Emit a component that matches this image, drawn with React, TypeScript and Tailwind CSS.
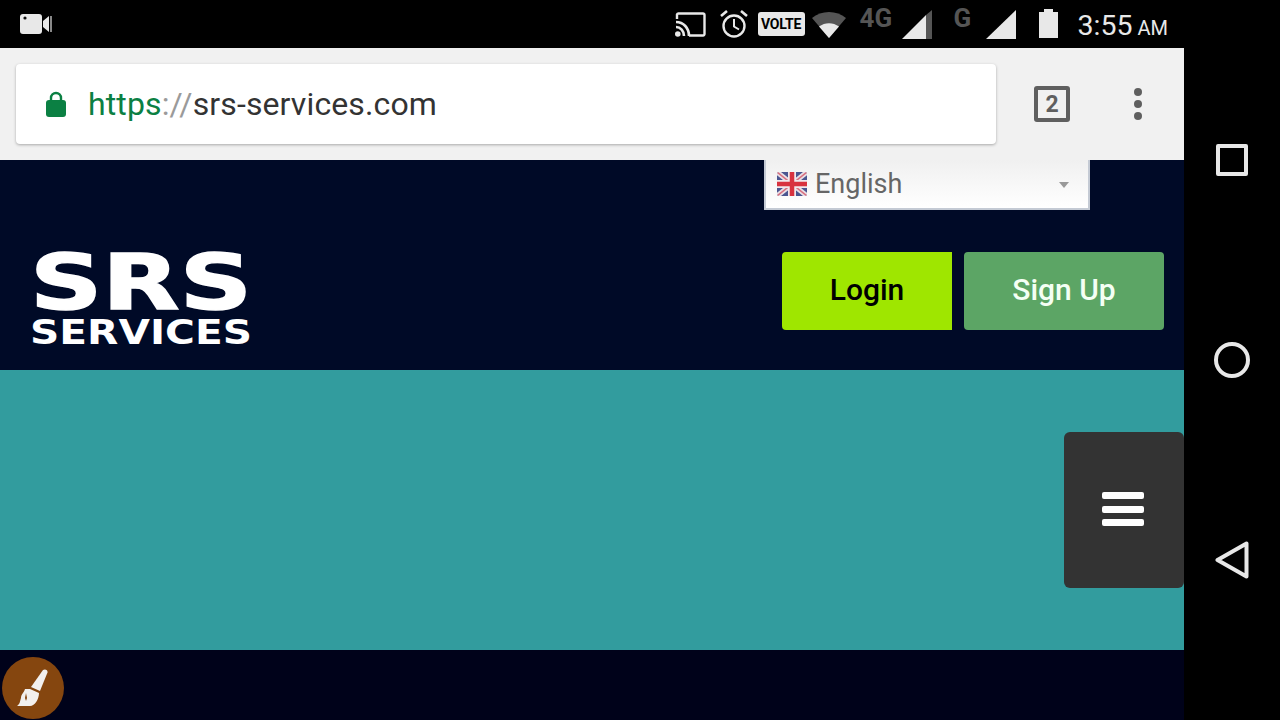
const StatusBar = () => (
  <div className="h-12 bg-black flex items-start relative font-['Roboto',sans-serif]">
    {/* camera */}
    <svg className="ml-5 mt-[13px]" width="32" height="22" viewBox="0 0 32 22">
      <rect x="0" y="1" width="22" height="20" rx="3" fill="#e8e8e8" />
      <circle cx="5" cy="5" r="1.6" fill="#111" />
      <path d="M23 8l6-5v16l-6-5z" fill="#e8e8e8" />
      <rect x="30" y="3" width="2" height="16" fill="#888" />
    </svg>
    <div className="ml-auto mr-4 flex items-start">
      {/* cast */}
      <svg className="mt-3" width="31" height="25" viewBox="0 0 31 25" fill="none">
        <path d="M2 7V2.500A1.500 1.500 0 0 1 3.500 1.500H28A1.500 1.500 0 0 1 29.500 3V22A1.500 1.500 0 0 1 28 23.500H14" stroke="#e8e8e8" strokeWidth="2.400" />
        <path d="M1 10c7.500 0 13 6 13 14M1 15c4.500 0 8 4 8 9" stroke="#e8e8e8" strokeWidth="2.600" />
        <circle cx="2.800" cy="22" r="2.800" fill="#e8e8e8" />
      </svg>
      {/* alarm */}
      <svg className="ml-[14px] mt-[10px]" width="28" height="28" viewBox="0 0 28 28" fill="none">
        <circle cx="14" cy="16" r="10.500" stroke="#e8e8e8" strokeWidth="2.400" />
        <path d="M14 9v7.500l5 3" stroke="#e8e8e8" strokeWidth="2" />
        <path d="M1 6l6-5M27 6l-6-5" stroke="#e8e8e8" strokeWidth="2.600" />
      </svg>
      <div className="ml-[10px] mt-3 w-[47px] h-6 rounded-[3px] bg-[#e8e8e8] text-black text-[14px] leading-6 font-bold text-center tracking-[-0.2px]">
        VOLTE
      </div>
      {/* wifi */}
      <svg className="ml-[7px] mt-[10px]" width="34" height="28" viewBox="0 0 34 28">
        <path d="M0 8C9 0 25 0 34 8L17 28z" fill="#555" />
        <path d="M7 16.500c6-4.500 14-4.500 20 0L17 28z" fill="#e8e8e8" />
      </svg>
      <span className="ml-[14px] mt-[4px] text-[26px] leading-7 font-bold text-[#555] w-[34px]">4G</span>
      <svg className="ml-2 mt-[10px]" width="30" height="29" viewBox="0 0 30 29">
        <path d="M0 29L24 5v24z" fill="#e8e8e8" />
        <path d="M24 5l6-5v29h-6z" fill="#555" />
      </svg>
      <span className="ml-[22px] mt-[4px] text-[26px] leading-7 font-bold text-[#555] w-[16px]">G</span>
      <svg className="ml-4 mt-[10px]" width="30" height="29" viewBox="0 0 30 29">
        <path d="M0 29L30 0v29z" fill="#e8e8e8" />
      </svg>
      <svg className="ml-[23px] mt-[9px]" width="19" height="29" viewBox="0 0 19 29">
        <path d="M5 0h9v3h5v26H0V3h5z" fill="#e8e8e8" />
      </svg>
      <div className="ml-5 mt-[8px] text-[#e8e8e8] leading-9 whitespace-nowrap">
        <span className="text-[28.5px]">3:55</span>
        <span className="text-[20px] ml-[5px]">AM</span>
      </div>
    </div>
  </div>
);

const Toolbar = () => (
  <div className="h-28 bg-[#f1f1f1] flex items-center pl-4 font-['Roboto',sans-serif]">
    <div className="w-[980px] h-20 bg-white rounded-[4px] shadow-[0_1px_3px_rgba(0,0,0,0.3)] flex items-center pl-[30px]">
      <svg width="20" height="26" viewBox="0 0 20 26" fill="none">
        <path d="M5 10V7a5 5 0 0 1 10 0v3" stroke="#0b8043" strokeWidth="2.400" />
        <rect x="0" y="9" width="20" height="17" rx="3" fill="#0b8043" />
      </svg>
      <div className="ml-[22px] text-[32px] tracking-[0.12px] text-[#333] whitespace-nowrap leading-none">
        <span className="text-[#0b8043]">https</span>
        <span className="text-[#9a9a9a]">://</span>
        srs-services.com
      </div>
    </div>
    <div className="ml-[38px] w-9 h-9 border-4 border-[#5f5f5f] rounded-[3px] flex items-center justify-center text-[#5f5f5f] text-[23px] font-bold leading-none">
      2
    </div>
    <div className="ml-[64px] flex flex-col gap-1">
      <div className="w-2 h-2 rounded-full bg-[#5f5f5f]" />
      <div className="w-2 h-2 rounded-full bg-[#5f5f5f]" />
      <div className="w-2 h-2 rounded-full bg-[#5f5f5f]" />
    </div>
  </div>
);

const UkFlag = () => (
  <svg width="30" height="24" viewBox="0 0 30 24" className="rounded-[2px] blur-[0.5px]">
    <rect width="30" height="24" fill="#4a5590" />
    <path d="M0 0L30 24M30 0L0 24" stroke="#e8dfe6" strokeWidth="5" />
    <path d="M0 0L30 24M30 0L0 24" stroke="#d9707f" strokeWidth="1.500" />
    <path d="M15 0v24M0 12h30" stroke="#f0e8ec" strokeWidth="8" />
    <path d="M15 0v24M0 12h30" stroke="#d8323f" strokeWidth="4.500" />
  </svg>
);

const Header = () => (
  <div className="h-[210px] bg-[#000a27] font-['Roboto',sans-serif]">
    <div className="flex justify-end pr-[94px]">
      <div className="w-[326px] h-[50px] border-2 border-t-0 border-[#c4cad4] bg-gradient-to-b from-[#f0f0f0] to-white flex items-center pl-[11px] pr-[19px]">
        <UkFlag />
        <span className="ml-2 text-[27px] leading-none text-[#666]">English</span>
        <div className="ml-auto w-0 h-0 border-x-[5px] border-x-transparent border-t-[6px] border-t-[#999] mt-[2px]" />
      </div>
    </div>
    <div className="flex items-start justify-between pl-[30px] pr-5 mt-[42px]">
      <div className="flex flex-col">
        <svg width="222" height="60" viewBox="0 0 222 60" className="block overflow-visible">
          <text x="0" y="57" textLength="222" lengthAdjust="spacingAndGlyphs" fontFamily="'DejaVu Sans', sans-serif" fontWeight="700" fontSize="76" fill="#fff" stroke="#fff" strokeWidth="1.500">
            SRS
          </text>
        </svg>
        <svg width="222" height="34" viewBox="0 0 222 34" className="block overflow-visible">
          <text x="0" y="32" textLength="222" lengthAdjust="spacingAndGlyphs" fontFamily="'DejaVu Sans', sans-serif" fontWeight="700" fontSize="33" fill="#fff">
            SERVICES
          </text>
        </svg>
      </div>
      <div className="flex gap-3">
        <button className="w-[170px] h-[78px] pb-[3px] bg-[#9fe600] text-black text-[30px] font-medium rounded-l-[4px]">Login</button>
        <button className="w-[200px] h-[78px] pb-[3px] bg-[#5ca565] text-[#f4fff4] text-[30px] font-medium rounded-[4px]">Sign Up</button>
      </div>
    </div>
  </div>
);

const Banner = () => (
  <div className="h-[280px] bg-[#329c9e] flex justify-end items-start pt-[62px]">
    <div className="w-[120px] h-[156px] bg-[#333333] rounded-[6px] flex flex-col items-center justify-center gap-[6.500px] pr-[3px] pb-[2px]">
      <div className="w-[42px] h-[7px] bg-white rounded-[2px]" />
      <div className="w-[42px] h-[7px] bg-white rounded-[2px]" />
      <div className="w-[42px] h-[7px] bg-white rounded-[2px]" />
    </div>
  </div>
);

const Footer = () => (
  <div className="h-[70px] bg-[#00021a] pl-[2px] pt-[7px]">
    <div className="w-[62px] h-[62px] rounded-full bg-[#85460f] flex items-center justify-center">
      <svg width="34" height="40" viewBox="0 0 34 40">
        <path d="M15 19L27 2c2-1.500 5 0 4.500 2.500L24 23z" fill="#f2f0ee" />
        <path d="M14 21l9 4c0 6-4 13-9 13H1c3-2 3-5 4-8 0-4 3-5 4-9z" fill="#f2f0ee" />
        <path d="M9 30l1-5 1 5-1 3z" fill="#85460f" />
      </svg>
    </div>
  </div>
);

const NavBar = () => (
  <div className="w-24 h-[720px] bg-black pt-[60px]">
    <div className="h-[200px] flex items-center justify-center">
      <div className="w-8 h-8 border-4 border-[#e8e8e8] rounded-[2px]" />
    </div>
    <div className="h-[200px] flex items-center justify-center">
      <div className="w-9 h-9 border-4 border-[#e8e8e8] rounded-full" />
    </div>
    <div className="h-[200px] flex items-center justify-center">
      <svg width="34" height="38" viewBox="0 0 34 38" fill="none">
        <path d="M2.500 19L31.500 2.500v33z" stroke="#e8e8e8" strokeWidth="4" strokeLinejoin="round" />
      </svg>
    </div>
  </div>
);

const App = () => {
  return (
    <div className="w-[1280px] h-[720px] overflow-hidden flex bg-black">
      <div className="w-[1184px]">
        <StatusBar />
        <Toolbar />
        <Header />
        <Banner />
        <Footer />
      </div>
      <NavBar />
    </div>
  );
};

export default App;
